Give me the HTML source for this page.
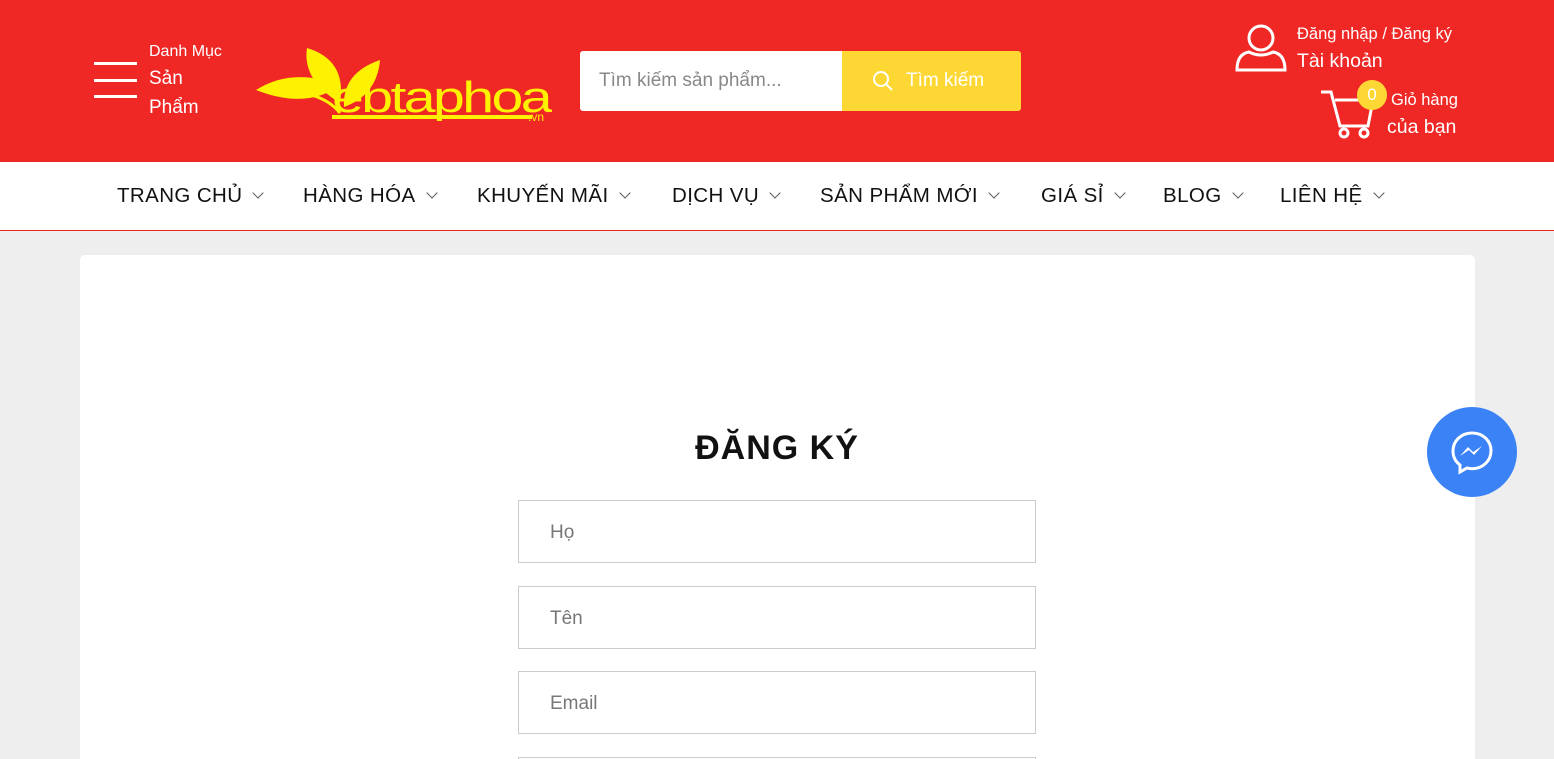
<!DOCTYPE html>
<html><head><meta charset="utf-8"><style>
*{margin:0;padding:0;box-sizing:border-box}
html,body{width:1554px;height:759px;overflow:hidden}
body{background:#eeeeee;font-family:"Liberation Sans",sans-serif;position:relative}
.hdr{position:absolute;left:0;top:0;width:1554px;height:162px;background:#ef2826;color:#fff}
.abs{position:absolute}
.nav{position:absolute;top:162px;left:0;width:1554px;height:69px;background:#fff;border-bottom:1px solid #ef2826}
.nav span{position:absolute;top:22px;font-size:20.5px;color:#111;letter-spacing:0.4px}
.nav span:after{content:"";display:inline-block;width:7px;height:7px;border-right:1.3px solid #555;border-bottom:1.3px solid #555;transform:rotate(45deg);margin-left:12px;position:relative;top:-5px}
.card{position:absolute;left:80px;top:255px;width:1395px;height:504px;background:#fff;border-radius:5px 5px 0 0}
.inp{position:absolute;left:518px;width:518px;height:63px;border:1px solid #ccc;background:#fff;font-size:19px;color:#777;padding:21px 0 0 31px}
</style></head><body>
<div class="hdr">
 <div class="abs" style="left:94px;top:62px;width:43px;height:3px;background:#fff"></div>
 <div class="abs" style="left:94px;top:79px;width:43px;height:3px;background:#fff"></div>
 <div class="abs" style="left:94px;top:95px;width:43px;height:3px;background:#fff"></div>
 <div class="abs" style="left:149px;top:43px;font-size:16px">Danh Mục</div>
 <div class="abs" style="left:149px;top:68px;font-size:19px">Sản</div>
 <div class="abs" style="left:149px;top:97px;font-size:19px">Phẩm</div>
 <svg class="abs" style="left:252px;top:45px" width="300" height="80">
  <path d="M4 45 Q40 22 88 40 Q55 65 4 45Z" fill="#fff200"/>
  <path d="M55 3 Q95 15 88 58 Q50 35 55 3Z" fill="#fff200"/>
  <path d="M128 15 Q125 50 92 62 Q90 28 128 15Z" fill="#fff200"/>
  <path d="M20 45 Q70 45 88 68" stroke="#fff200" stroke-width="3" fill="none"/>
  <text x="80" y="67" font-family="Liberation Sans" font-size="44" fill="#fff200" letter-spacing="-2" textLength="218" lengthAdjust="spacingAndGlyphs">ebtaphoa</text>
  <rect x="80" y="70" width="200" height="4" fill="#fff200"/>
  <text x="276" y="76" font-size="12" fill="#fff200">.vn</text>
 </svg>
 <div class="abs" style="left:580px;top:51px;width:262px;height:60px;background:#fff;border-radius:3px 0 0 3px;color:#888;font-size:19px;padding:19px 0 0 19px">Tìm kiếm sản phẩm...</div>
 <div class="abs" style="left:842px;top:51px;width:179px;height:60px;background:#fdd835;border-radius:0 3px 3px 0;font-size:19px;padding:19px 0 0 64px">Tìm kiếm</div>
 <svg class="abs" style="left:872px;top:70px" width="22" height="22"><circle cx="9" cy="9" r="7" stroke="#fff" stroke-width="2" fill="none"/><path d="M14 14l6 6" stroke="#fff" stroke-width="2"/></svg>
 <svg class="abs" style="left:1234px;top:22px" width="54" height="52"><circle cx="27" cy="16" r="12" stroke="#fff" stroke-width="3" fill="none"/><path d="M3 48 Q3 32 15 30 Q27 36 39 30 Q51 32 51 48Z" stroke="#fff" stroke-width="3" fill="none"/></svg>
 <div class="abs" style="left:1297px;top:25px;font-size:16.5px">Đăng nhập / Đăng ký</div>
 <div class="abs" style="left:1297px;top:50px;font-size:19.5px">Tài khoản</div>
 <svg class="abs" style="left:1318px;top:88px" width="60" height="52"><path d="M3 4h10l9 34h28l5-26H17" stroke="#fff" stroke-width="3" fill="none"/><circle cx="26" cy="45" r="4" stroke="#fff" stroke-width="3" fill="none"/><circle cx="46" cy="45" r="4" stroke="#fff" stroke-width="3" fill="none"/></svg>
 <div class="abs" style="left:1357px;top:80px;width:30px;height:30px;border-radius:50%;background:#fdd835;text-align:center;font-size:17px;line-height:30px">0</div>
 <div class="abs" style="left:1391px;top:91px;font-size:16.5px">Giỏ hàng</div>
 <div class="abs" style="left:1387px;top:116px;font-size:19.5px">của bạn</div>
</div>
<div class="nav">
 <span style="left:117px">TRANG CHỦ</span><span style="left:303px">HÀNG HÓA</span><span style="left:477px">KHUYẾN MÃI</span><span style="left:672px">DỊCH VỤ</span><span style="left:820px">SẢN PHẨM MỚI</span><span style="left:1041px">GIÁ SỈ</span><span style="left:1163px">BLOG</span><span style="left:1280px">LIÊN HỆ</span>
</div>
<div class="card"></div>
<div class="abs" style="left:0;top:429px;width:1554px;text-align:center;font-size:34px;font-weight:bold;color:#111;letter-spacing:1px">ĐĂNG KÝ</div>
<div class="inp" style="top:500px">Họ</div>
<div class="inp" style="top:586px">Tên</div>
<div class="inp" style="top:671px">Email</div>
<div class="inp" style="top:757px;height:2px"></div>
<div class="abs" style="left:1427px;top:407px;width:90px;height:90px;border-radius:50%;background:#3b82f6"></div>
<svg class="abs" style="left:1447px;top:427px" width="50" height="50"><path d="M25 6C14 6 6 14 6 24c0 6 3 11 7 14v7l7-4c2 .5 3 .7 5 .7 11 0 19-8 19-18S36 6 25 6z" fill="none" stroke="#fff" stroke-width="3"/><path d="M13 29l8-9 5 5 9-6-8 9-5-5z" fill="#fff"/></svg>
</body></html>
